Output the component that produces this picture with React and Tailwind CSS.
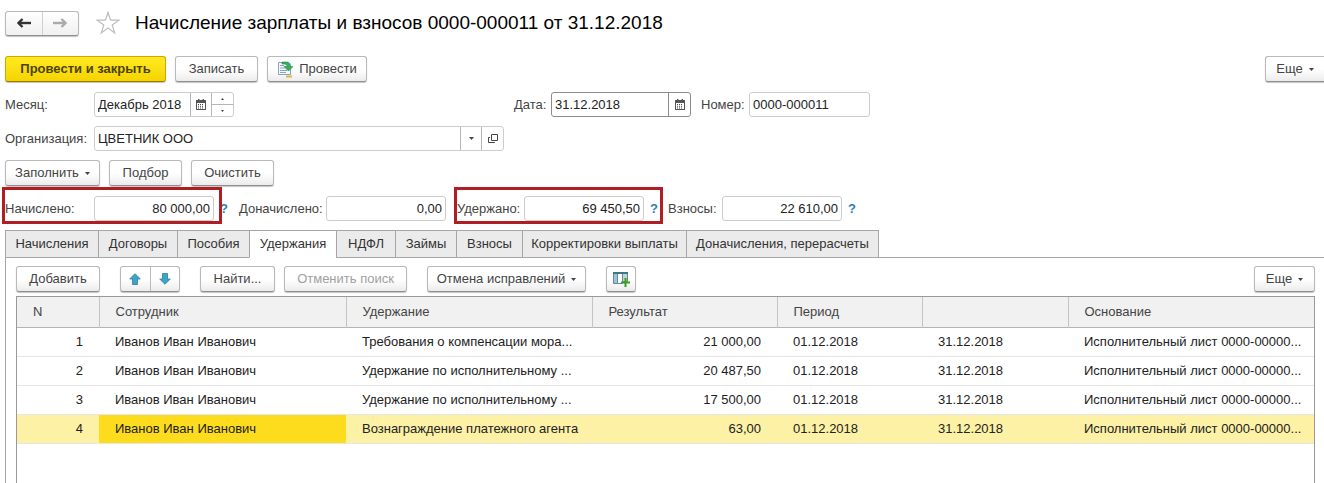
import React, { useState } from "react";
import clsx from "clsx";

const tabs = [
  { name: "Начисления", width: "w-[94px]" },
  { name: "Договоры", width: "w-[80px]" },
  { name: "Пособия", width: "w-[73px]" },
  { name: "Удержания", width: "w-[88px]" },
  { name: "НДФЛ", width: "w-[60px]" },
  { name: "Займы", width: "w-[62px]" },
  { name: "Взносы", width: "w-[67px]" },
  { name: "Корректировки выплаты", width: "w-[165px]" },
  { name: "Доначисления, перерасчеты", width: "w-[193px]" },
];

const columns = [
  { title: "N", width: "w-[82px]" },
  { title: "Сотрудник", width: "w-[247px]" },
  { title: "Удержание", width: "w-[246px]" },
  { title: "Результат", width: "w-[185px]" },
  { title: "Период", width: "w-[145px]" },
  { title: "", width: "w-[146px]" },
  { title: "Основание", width: "" },
];

const employee = "Иванов Иван Иванович";
const basis = "Исполнительный лист 0000-00000...";

const rows = [
  { n: 1, deduction: "Требования о компенсации мора...", result: "21 000,00" },
  { n: 2, deduction: "Удержание по исполнительному ...", result: "20 487,50" },
  { n: 3, deduction: "Удержание по исполнительному ...", result: "17 500,00" },
  { n: 4, deduction: "Вознаграждение платежного агента", result: "63,00" },
];

function Caret() {
  return (
    <svg width="5" height="3" viewBox="0 0 5 3" className="shrink-0" aria-hidden="true">
      <path d="M0 0h5L2.5 3z" fill="#444" />
    </svg>
  );
}

function CalendarIcon() {
  return (
    <svg width="10" height="11" viewBox="0 0 10 11" aria-hidden="true">
      <path d="M2 0h1.4v1h3.2V0H8v1h2v10H0V1h2zM1 4v6h8V4z" fill="#555" fillRule="evenodd" />
      <path d="M2 5h1v1H2zm2 0h1v1H4zm2 0h1v1H6zM2 6.8h1v1H2zm2 0h1v1H4zm2 0h1v1H6zM2 8.6h1v.8H2zm2 0h1v.8H4zm2 0h1v.8H6z" fill="#444" />
    </svg>
  );
}

function OpenIcon() {
  return (
    <svg width="10" height="10" viewBox="0 0 10 10" fill="none" stroke="#444" aria-hidden="true">
      <path d="M3.5.5h6v6h-6z" />
      <path d="M2 3.500H.5v5h6V8" />
    </svg>
  );
}

function NavArrow({ color, flip }) {
  return (
    <svg width="14" height="10" viewBox="0 0 14 10" fill="none" stroke={color} strokeWidth="2.4" className={clsx(flip && "rotate-180")} aria-hidden="true">
      <path d="M14 5H2" />
      <path d="M5.500 1 1.500 5l4 4" />
    </svg>
  );
}

function MoveArrow({ flip }) {
  return (
    <svg width="12" height="12" viewBox="0 0 12 12" className={clsx(flip && "rotate-180")} aria-hidden="true">
      <path d="M6 .7 11.300 6H8.500v5.500h-5V6H.7z" fill="#3fa3c8" stroke="#2b7fa3" strokeWidth=".8" />
    </svg>
  );
}

function PostIcon() {
  return (
    <svg width="16" height="17" viewBox="0 0 16 17" fill="none" aria-hidden="true">
      <path d="M1.500 1.500h9l3 4v8h-12z" fill="#f4f8fb" stroke="#8ba5b8" />
      <path d="M3 4.500h4M3 7h5M3 9.500h7M3 11.500h6" stroke="#8ba5b8" />
      <path d="M9 15.500h6" stroke="#e0b73a" strokeWidth="2" />
      <path d="M5 1h4c3.500 0 4.500 1.500 4.500 4.500H16L11.500 10 7 5.500h3C10 3.500 9 3 5 3z" fill="#35ad5d" stroke="#1f8a45" strokeWidth=".6" />
    </svg>
  );
}

function AddColumnIcon() {
  return (
    <svg width="17" height="15" viewBox="0 0 17 15" fill="none" aria-hidden="true">
      <path d="M.5.5h4v11h-4z" fill="#9dc3d6" stroke="#5d8ba2" />
      <path d="M4.500.5h5v11h-5z" fill="#fff" stroke="#5d8ba2" />
      <path d="M9.500.5h5v9h-5z" fill="#b8d8d0" stroke="#5d8ba2" />
      <path d="M0 1h15" stroke="#43748d" strokeWidth="2" />
      <path d="M12.500 6v9M8 10.500h9" stroke="#3f9e1c" strokeWidth="2" />
    </svg>
  );
}

function Button({ className, primary, children, ...props }) {
  return (
    <button
      type="button"
      className={clsx(
        "flex h-[26px] shrink-0 items-center justify-center gap-[6px] rounded-[3px] border bg-linear-to-b whitespace-nowrap shadow-[0_1px_1px_#c4c4c4] disabled:text-[#a0a0a0]",
        primary
          ? "border-[#c9a800] border-b-[#947b00] from-[#ffea1f] to-[#f5d400] font-bold text-[#4d4200]"
          : "border-[#b9b9b9] border-b-[#8f8f8f] from-white from-50% to-[#ececec]",
        className
      )}
      {...props}
    >
      {children}
    </button>
  );
}

function Field({ id, value, className, inputClass, dark, children }) {
  return (
    <div
      className={clsx(
        "flex h-[25px] shrink-0 divide-x overflow-hidden rounded-[3px] border bg-white",
        dark ? "divide-[#8c8c8c] border-[#8c8c8c]" : "divide-[#b5b5b5] border-[#cdcdcd]",
        className
      )}
    >
      <input id={id} defaultValue={value} className={clsx("min-w-0 flex-1 px-[3px] text-[#222] outline-none", inputClass)} />
      {children}
    </div>
  );
}

function FieldButton({ label, children }) {
  return (
    <button type="button" aria-label={label} className="flex w-[21px] shrink-0 items-center justify-center">
      {children}
    </button>
  );
}

function Total({ id, label, value, labelClass, help, marked }) {
  return (
    <div className="relative flex items-center">
      <label htmlFor={id} className={labelClass}>{label}</label>
      <Field id={id} value={value} className="w-[120px]" inputClass="text-right" />
      {help && (
        <button type="button" className="w-5 text-center font-bold text-[#2d7fb5]">?</button>
      )}
      {marked && (
        <span className={clsx("pointer-events-none absolute -top-[9px] -bottom-[3px] -left-[3px] border-[3px] border-[#b01e24]", marked)} />
      )}
    </div>
  );
}

function App() {
  const [activeTab, setActiveTab] = useState("Удержания");
  const [selected, setSelected] = useState(4);

  return (
    <div className="flex min-h-screen flex-col overflow-hidden bg-white font-['Liberation_Sans',Arial,sans-serif] text-[13px] leading-4 text-[#444]">
      <header className="flex h-[46px] items-center pl-[5px]">
        <div className="flex h-[25px] w-[74px] divide-x divide-[#d0d0d0] rounded-[3px] border border-[#b9b9b9] border-b-[#8f8f8f] bg-linear-to-b from-white to-[#f0f0f0] shadow-[0_1px_1px_#c4c4c4]">
          <button type="button" aria-label="Назад" className="flex flex-1 items-center justify-center"><NavArrow color="#333" /></button>
          <button type="button" aria-label="Вперед" className="flex flex-1 items-center justify-center"><NavArrow color="#aaa" flip /></button>
        </div>
        <button type="button" aria-label="В избранное" className="ml-[17px]">
          <svg width="24" height="24" viewBox="0 0 24 24" fill="#fff" stroke="#bdbdbd" strokeWidth="1.2" aria-hidden="true">
            <path d="m12 1.500 2.600 7.700h8.200l-6.600 4.800 2.500 7.900L12 17.100l-6.700 4.800L7.800 14 1.200 9.200h8.200z" />
          </svg>
        </button>
        <h1 className="ml-[15px] text-[19px] leading-6 whitespace-nowrap text-black">Начисление зарплаты и взносов 0000-000011 от 31.12.2018</h1>
      </header>

      <div className="mt-[10px] flex gap-[9px] pl-[5px]">
        <Button primary className="w-[161px]">Провести и закрыть</Button>
        <Button className="w-[83px]">Записать</Button>
        <Button className="w-[100px]"><PostIcon />Провести</Button>
        <Button className="ml-auto w-[59px] rounded-r-none border-r-0">Еще <Caret /></Button>
      </div>

      <div className="mt-[10px] flex items-center pl-[5px]">
        <label htmlFor="month" className="w-[89px]">Месяц:</label>
        <Field id="month" value="Декабрь 2018" className="w-[140px]">
          <FieldButton label="Выбрать месяц"><CalendarIcon /></FieldButton>
          <div className="flex w-[21px] flex-col divide-y divide-[#b5b5b5]">
            <button type="button" aria-label="Больше" className="flex flex-1 items-center justify-center">
              <svg width="3" height="2" viewBox="0 0 3 2" aria-hidden="true"><path d="M0 2h3L1.500 0z" fill="#444" /></svg>
            </button>
            <button type="button" aria-label="Меньше" className="flex flex-1 items-center justify-center">
              <svg width="3" height="2" viewBox="0 0 3 2" aria-hidden="true"><path d="M0 0h3L1.500 2z" fill="#444" /></svg>
            </button>
          </div>
        </Field>
        <label htmlFor="date" className="ml-[280px] w-[37px]">Дата:</label>
        <Field id="date" value="31.12.2018" className="w-[140px]" dark>
          <FieldButton label="Выбрать дату"><CalendarIcon /></FieldButton>
        </Field>
        <label htmlFor="number" className="ml-[10px] w-[48px]">Номер:</label>
        <Field id="number" value="0000-000011" className="w-[121px]" />
      </div>

      <div className="mt-[9px] flex items-center pl-[5px]">
        <label htmlFor="organization" className="w-[89px]">Организация:</label>
        <Field id="organization" value="ЦВЕТНИК ООО" className="w-[410px]">
          <FieldButton label="Выбрать"><Caret /></FieldButton>
          <FieldButton label="Открыть"><OpenIcon /></FieldButton>
        </Field>
      </div>

      <div className="mt-[9px] flex gap-[9px] pl-[5px]">
        <Button className="w-[95px]">Заполнить <Caret /></Button>
        <Button className="w-[73px]">Подбор</Button>
        <Button className="w-[83px]">Очистить</Button>
      </div>

      <div className="mt-[10px] flex pl-[5px]">
        <Total id="accrued" label="Начислено:" value="80 000,00" labelClass="w-[89px]" help marked="w-[220px]" />
        <div className="ml-[5px]">
          <Total id="extra" label="Доначислено:" value="0,00" labelClass="w-[87px]" />
        </div>
        <div className="ml-[11px]">
          <Total id="withheld" label="Удержано:" value="69 450,50" labelClass="w-[67px]" help marked="w-[209px]" />
        </div>
        <div className="ml-1">
          <Total id="contributions" label="Взносы:" value="22 610,00" labelClass="w-[54px]" help />
        </div>
      </div>

      <div role="tablist" className="relative z-10 mt-[9px] flex pl-[5px]">
        {tabs.map(({ name, width }) => (
          <button
            key={name}
            type="button"
            role="tab"
            aria-selected={activeTab === name}
            onClick={() => setActiveTab(name)}
            className={clsx(
              "-mr-px h-7 shrink-0 border border-[#a6a6a6] whitespace-nowrap text-[#333]",
              width,
              activeTab === name ? "border-b-white bg-white" : "bg-[#ebebeb]"
            )}
          >
            {name}
          </button>
        ))}
      </div>

      <main className="-mt-px ml-[5px] flex flex-1 flex-col border-t border-l border-[#a6a6a6] pt-2 pr-[9px] pl-[10px]">
        <div className="flex">
          <Button className="w-[84px]">Добавить</Button>
          <div className="ml-5 flex h-[26px] w-[60px] divide-x divide-[#b9b9b9] rounded-[3px] border border-[#b9b9b9] border-b-[#8f8f8f] bg-linear-to-b from-white from-50% to-[#ececec] shadow-[0_1px_1px_#c4c4c4]">
            <button type="button" aria-label="Вверх" className="flex flex-1 items-center justify-center"><MoveArrow /></button>
            <button type="button" aria-label="Вниз" className="flex flex-1 items-center justify-center"><MoveArrow flip /></button>
          </div>
          <Button className="ml-5 w-[75px]">Найти...</Button>
          <Button className="ml-[9px] w-[123px]" disabled>Отменить поиск</Button>
          <Button className="ml-5 w-[159px]">Отмена исправлений <Caret /></Button>
          <Button className="ml-5 w-[30px]" aria-label="Настроить колонки"><AddColumnIcon /></Button>
          <Button className="ml-auto w-[61px]">Еще <Caret /></Button>
        </div>

        <div className="mt-1 flex-1 border-x border-t border-[#999]">
          <table className="w-full table-fixed border-collapse text-left">
            <thead>
              <tr className="h-[30px] border-b border-[#b5b5b5] bg-[#f1f1f1]">
                {columns.map(({ title, width }, i) => (
                  <th key={i} className={clsx("border-r border-[#c4c4c4] px-4 font-normal last:border-r-0", width)}>{title}</th>
                ))}
              </tr>
            </thead>
            <tbody className="text-[#222]">
              {rows.map(({ n, deduction, result }) => (
                <tr
                  key={n}
                  onClick={() => setSelected(n)}
                  className={clsx("h-[29px] border-b border-[#e6e6e6] *:pl-4 *:whitespace-nowrap", selected === n && "bg-[#fcf1a4]")}
                >
                  <td className="pr-4 text-right">{n}</td>
                  <td className={clsx(selected === n && "bg-[#fcdc1c]")}>{employee}</td>
                  <td>{deduction}</td>
                  <td className="pr-4 text-right">{result}</td>
                  <td>01.12.2018</td>
                  <td>31.12.2018</td>
                  <td>{basis}</td>
                </tr>
              ))}
            </tbody>
          </table>
        </div>
      </main>
    </div>
  );
}

export default App;
